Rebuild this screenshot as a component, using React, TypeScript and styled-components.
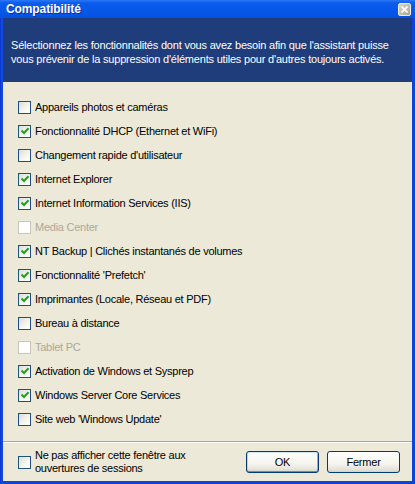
import React from "react";
import styled, { createGlobalStyle } from "styled-components";

const GlobalStyle = createGlobalStyle`
  html, body { margin: 0; padding: 0; background: #0A3FD2; }
  * { box-sizing: border-box; }
`;

const Window = styled.div`
  width: 415px;
  height: 484px;
  display: flex;
  flex-direction: column;
  background: linear-gradient(90deg, #0832C8 0px, #1652E6 2px, #0A44DC 3px);
  font-family: "Liberation Sans", Arial, sans-serif;
  font-size: 11px;
  color: #000;
  overflow: hidden;
`;

const TitleBar = styled.div`
  height: 18px;
  flex: none;
  display: flex;
  align-items: center;
  justify-content: space-between;
  padding: 0 4px 0 6px;
  background: linear-gradient(180deg, #2A78F6 0px, #0A5CEE 3px, #0657E8 12px, #0551DC 18px);
`;

const Title = styled.span`
  color: #fff;
  font-weight: bold;
  font-size: 12px;
  letter-spacing: -0.1px;
  text-shadow: 1px 1px 0 #0A2F9A;
`;

const CloseButton = styled.div`
  width: 13px;
  height: 13px;
  border-radius: 2px;
  border: 1px solid #EDEBE4;
  background: linear-gradient(135deg, #D9D6CB 0%, #A8A599 100%);
  display: flex;
  align-items: center;
  justify-content: center;
`;

const Frame = styled.div`
  flex: 1;
  display: flex;
  flex-direction: column;
  margin: 0 3px 3px 3px;
  background: #ECE9D8;
`;

const Header = styled.div`
  height: 64px;
  flex: none;
  background: #1F3D7A;
  color: #fff;
  padding: 20px 8px 0 8px;
  line-height: 14px;
  letter-spacing: -0.2px;
`;

const List = styled.div`
  display: flex;
  flex-direction: column;
  padding: 13px 0 0 15px;
  flex: 1;
`;

const Row = styled.label<{ $disabled?: boolean }>`
  height: 24px;
  display: flex;
  align-items: center;
  gap: 4px;
  letter-spacing: -0.25px;
  color: ${(p) => (p.$disabled ? "#ACA899" : "#000")};
`;

const Box = styled.span<{ $disabled?: boolean }>`
  width: 13px;
  height: 13px;
  flex: none;
  border: 1px solid ${(p) => (p.$disabled ? "#CAC8BB" : "#1C5180")};
  background: ${(p) =>
    p.$disabled
      ? "#FFFFFF"
      : "linear-gradient(135deg, #DCDCD7 0%, #F4F4F0 55%, #FFFFFF 100%)"};
  display: flex;
  align-items: center;
  justify-content: center;
`;

const Separator = styled.div`
  height: 2px;
  flex: none;
  border-top: 1px solid #ACA899;
  border-bottom: 1px solid #FFFFFF;
`;

const Footer = styled.div`
  height: 38px;
  flex: none;
  display: flex;
  align-items: center;
  padding: 0 12px 0 15px;
  gap: 8px;
`;

const FooterLabel = styled.label`
  flex: 1;
  display: flex;
  align-items: center;
  gap: 4px;
  line-height: 13px;
  letter-spacing: -0.25px;
`;

const Button = styled.button<{ $default?: boolean }>`
  width: 73px;
  height: 22px;
  border: 1px solid #003C74;
  border-radius: 3px;
  font-family: "Liberation Sans", Arial, sans-serif;
  font-size: 11px;
  letter-spacing: -0.2px;
  color: #000;
  padding: 0;
  background: linear-gradient(180deg, #FFFFFF 0%, #F5F4EE 60%, #E3E0D6 90%, #D6D0C5 100%);
  box-shadow: ${(p) =>
    p.$default
      ? "inset 0 1px 0 #CEE7FF, inset 0 -1px 0 #6982EE, inset 1px 0 0 #B8D2F8, inset -1px 0 0 #8FAAF0"
      : "none"};
`;

const items: { label: string; checked: boolean; disabled?: boolean }[] = [
  { label: "Appareils photos et caméras", checked: false },
  { label: "Fonctionnalité DHCP (Ethernet et WiFi)", checked: true },
  { label: "Changement rapide d'utilisateur", checked: false },
  { label: "Internet Explorer", checked: true },
  { label: "Internet Information Services (IIS)", checked: true },
  { label: "Media Center", checked: false, disabled: true },
  { label: "NT Backup | Clichés instantanés de volumes", checked: true },
  { label: "Fonctionnalité 'Prefetch'", checked: true },
  { label: "Imprimantes (Locale, Réseau et PDF)", checked: true },
  { label: "Bureau à distance", checked: false },
  { label: "Tablet PC", checked: false, disabled: true },
  { label: "Activation de Windows et Sysprep", checked: true },
  { label: "Windows Server Core Services", checked: true },
  { label: "Site web 'Windows Update'", checked: false },
];

const Check = () => (
  <svg width="8" height="8" viewBox="0 0 8 8">
    <path d="M0.5 3.5 L3 6 L7.5 1.2" fill="none" stroke="#21A121" strokeWidth="2" />
  </svg>
);

const Checkbox = ({ checked, disabled }: { checked: boolean; disabled?: boolean }) => (
  <Box $disabled={disabled}>{checked && <Check />}</Box>
);

export default function App() {
  return (
    <>
      <GlobalStyle />
      <Window>
        <TitleBar>
          <Title>Compatibilité</Title>
          <CloseButton>
            <svg width="7" height="7" viewBox="0 0 7 7">
              <path d="M0.5 0.5 L6.5 6.5 M6.5 0.5 L0.5 6.5" stroke="#fff" strokeWidth="1.6" />
            </svg>
          </CloseButton>
        </TitleBar>
        <Frame>
          <Header>
            Sélectionnez les fonctionnalités dont vous avez besoin afin que l'assistant puisse
            <br />
            vous prévenir de la suppression d'éléments utiles pour d'autres toujours activés.
          </Header>
          <List>
            {items.map((it) => (
              <Row key={it.label} $disabled={it.disabled}>
                <Checkbox checked={it.checked} disabled={it.disabled} />
                {it.label}
              </Row>
            ))}
          </List>
          <Separator />
          <Footer>
            <FooterLabel>
              <Checkbox checked={false} />
              <span>
                Ne pas afficher cette fenêtre aux
                <br />
                ouvertures de sessions
              </span>
            </FooterLabel>
            <Button $default>OK</Button>
            <Button>Fermer</Button>
          </Footer>
        </Frame>
      </Window>
    </>
  );
}
